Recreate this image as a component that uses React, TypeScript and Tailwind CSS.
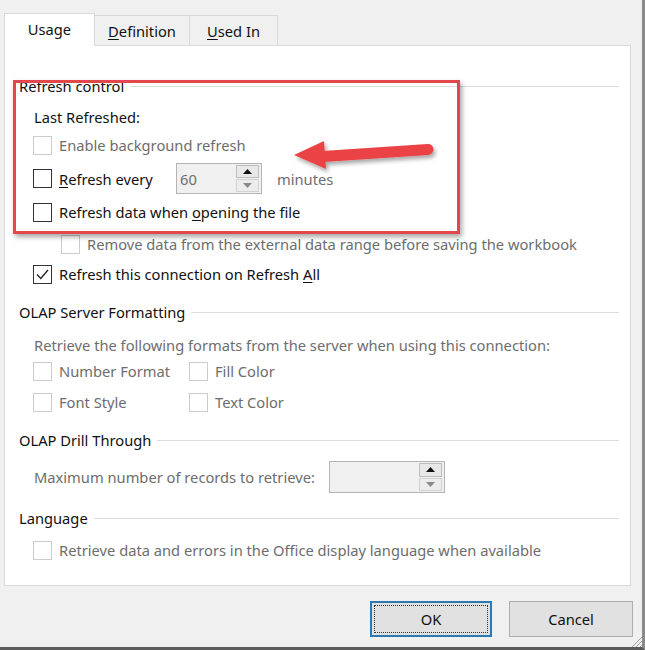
import React from "react";

const font = { fontFamily: '"Segoe UI", "Noto Sans", "Open Sans", sans-serif' };

function Check({ disabled, checked }: { disabled?: boolean; checked?: boolean }) {
  return (
    <div
      className={`w-[19px] h-[19px] shrink-0 bg-white border flex items-center justify-center ${
        disabled ? "border-[#cccccc]" : "border-[#333333]"
      }`}
    >
      {checked && (
        <svg width="15" height="15" viewBox="0 0 15 15">
          <path d="M2 7.5 L5.8 11.5 L13 3" fill="none" stroke="#222" strokeWidth="1.3" />
        </svg>
      )}
    </div>
  );
}

function Row({
  children,
  disabled,
  checked,
  className = "",
  indent = "pl-[28px]",
}: {
  children: React.ReactNode;
  disabled?: boolean;
  checked?: boolean;
  className?: string;
  indent?: string;
}) {
  return (
    <div className={`flex items-center h-[20px] ${indent} ${className}`}>
      <Check disabled={disabled} checked={checked} />
      <span className={`ml-[7px] whitespace-nowrap ${disabled ? "text-[#6d6d6d]" : "text-[#111]"}`}>{children}</span>
    </div>
  );
}

function Group({ title, className = "" }: { title: string; className?: string }) {
  return (
    <div className={`flex items-center h-[20px] pl-[14px] pr-[11px] ${className}`}>
      <span className="whitespace-nowrap text-[#111]">{title}</span>
      <div className="flex-1 h-px bg-[#dcdcdc] ml-[6px]" />
    </div>
  );
}

function Spin({ value, width }: { value: string; width: string }) {
  return (
    <div className={`${width} h-full border border-[#b4b4b4] bg-[#f0f0f0] flex items-stretch`}>
      <div className="flex-1 pl-[3px] flex items-center text-[#6d6d6d]">{value}</div>
      <div className="w-[25px] flex flex-col py-[1px] pr-[2px] gap-[1px]">
        <div className="flex-1 border border-[#bdbdbd] bg-[#e8e8e8] flex items-center justify-center">
          <svg width="9" height="5" viewBox="0 0 9 5">
            <path d="M0 5 L4.5 0 L9 5 Z" fill="#111" />
          </svg>
        </div>
        <div className="flex-1 border border-[#d2d2d2] bg-[#ececec] flex items-center justify-center">
          <svg width="9" height="5" viewBox="0 0 9 5">
            <path d="M0 0 L9 0 L4.5 5 Z" fill="#8a8a8a" />
          </svg>
        </div>
      </div>
    </div>
  );
}

export default function App() {
  return (
    <div
      style={font}
      className="relative w-[645px] h-[650px] bg-[#f0f0f0] border-r-[3px] border-b-[3px] border-r-[#8a8a8a] border-b-[#5a5a5a] text-[14.7px] leading-[20px] overflow-hidden"
    >
      {/* Tabs */}
      <div className="flex items-end pl-[4px] pt-[13px] h-[46px]">
        <div className="relative z-10 w-[91px] h-[33px] bg-white border border-b-0 border-[#d9d9d9] flex items-center justify-center pb-[2px] text-[#111]">
          Usage
        </div>
        <div className="w-[95px] h-[31px] border-t border-r border-[#d9d9d9] flex items-center justify-center text-[#111]">
          <span>
            <u className="underline-offset-2">D</u>efinition
          </span>
        </div>
        <div className="w-[88px] h-[31px] border-t border-r border-[#d9d9d9] flex items-center justify-center text-[#111]">
          <span>
            <u className="underline-offset-2">U</u>sed In
          </span>
        </div>
      </div>

      {/* Panel */}
      <div className="ml-[4px] -mt-px w-[627px] h-[541px] bg-white border border-[#d9d9d9] flex flex-col pt-[30px]">
        <Group title="Refresh control" />
        <div className="h-[20px] mt-[11px] pl-[29px] flex items-center text-[#111]">Last Refreshed:</div>
        <Row disabled className="mt-[8px]">
          Enable background refresh
        </Row>
        <div className="flex items-center h-[31px] mt-[8px] pl-[28px]">
          <Check />
          <span className="ml-[7px] w-[117px] text-[#111] whitespace-nowrap">
            <u className="underline-offset-2">R</u>efresh every
          </span>
          <Spin value="60" width="w-[86px]" />
          <span className="ml-[15px] text-[#6d6d6d]">minutes</span>
        </div>
        <Row className="mt-[8px]">
          Refresh data when <u className="underline-offset-2">o</u>pening the file
        </Row>
        <Row disabled indent="pl-[56px]" className="mt-[12px]">
          Remove data from the external data range before saving the workbook
        </Row>
        <Row checked className="mt-[10px]">
          Refresh this connection on Refresh <u className="underline-offset-2">A</u>ll
        </Row>

        <Group title="OLAP Server Formatting" className="mt-[18px]" />
        <div className="h-[20px] mt-[13px] pl-[29px] flex items-center text-[#6d6d6d] whitespace-nowrap">
          Retrieve the following formats from the server when using this connection:
        </div>
        <div className="grid grid-cols-[184px_1fr] mt-[6px] gap-y-[11px]">
          <Row disabled>Number Format</Row>
          <Row disabled indent="pl-0">
            Fill Color
          </Row>
          <Row disabled>Font Style</Row>
          <Row disabled indent="pl-0">
            Text Color
          </Row>
        </div>

        <Group title="OLAP Drill Through" className="mt-[18px]" />
        <div className="flex items-center h-[32px] mt-[11px] pl-[29px]">
          <span className="w-[295px] text-[#6d6d6d] whitespace-nowrap">Maximum number of records to retrieve:</span>
          <Spin value="" width="w-[116px]" />
        </div>

        <Group title="Language" className="mt-[15px]" />
        <Row disabled className="mt-[12px]">
          Retrieve data and errors in the Office display language when available
        </Row>
      </div>

      {/* Buttons */}
      <div className="flex justify-end gap-[17px] pr-[9px] mt-[15px]">
        <div className="w-[122px] h-[36px] border-2 border-[#2b79b5] bg-[#e1e1e1] p-[2px]">
          <div className="w-full h-full border border-dotted border-[#333] flex items-center justify-center text-[#111]">
            OK
          </div>
        </div>
        <div className="w-[124px] h-[36px] border border-[#adadad] bg-[#e1e1e1] flex items-center justify-center text-[#111]">
          Cancel
        </div>
      </div>

      {/* Resize grip */}
      <svg className="absolute right-0 bottom-0" width="12" height="12" viewBox="0 0 12 12">
        <path d="M12 2 L2 12 M12 6 L6 12 M12 10 L10 12" stroke="#9a9a9a" strokeWidth="1" />
      </svg>

      {/* Red annotation box */}
      <div className="absolute left-[13px] top-[80px] w-[447px] h-[154px] border-[3px] border-[#e2474b] shadow-[2px_3px_5px_rgba(0,0,0,0.35)]" />

      {/* Red arrow */}
      <svg className="absolute left-[285px] top-[133px]" width="160" height="48" viewBox="0 0 160 48">
        <defs>
          <filter id="sh" x="-10%" y="-30%" width="130%" height="170%">
            <feDropShadow dx="2" dy="3" stdDeviation="2" floodColor="#000" floodOpacity="0.35" />
          </filter>
        </defs>
        <g filter="url(#sh)">
          <path d="M38 23.5 L143 16.5" stroke="#ea4344" strokeWidth="11" strokeLinecap="round" />
          <path d="M9 22 L39 8 L41 36 Z" fill="#ea4344" />
        </g>
      </svg>
    </div>
  );
}
